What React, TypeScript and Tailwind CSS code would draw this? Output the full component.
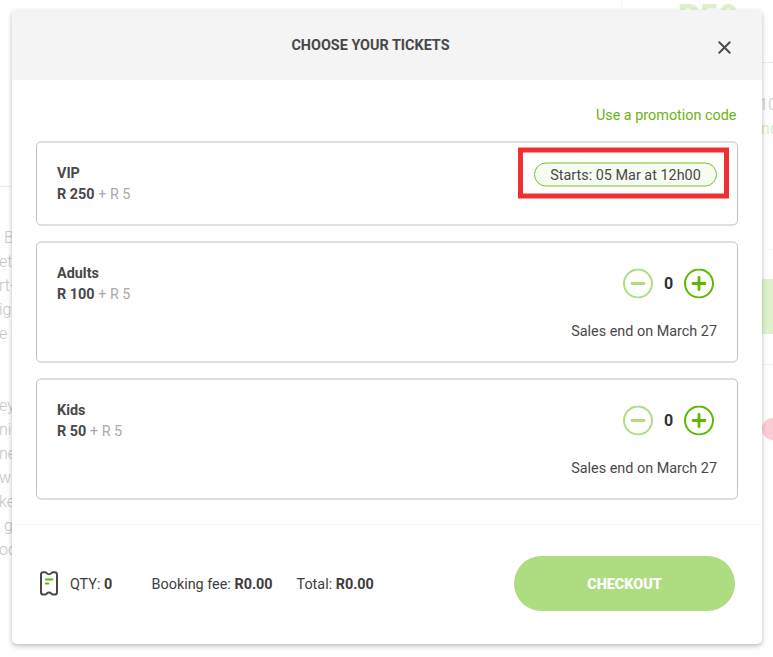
import { X } from "lucide-react";

const TICKETS = [
  { name: "VIP", price: "R 250", fee: "+ R 5", starts: "Starts: 05 Mar at 12h00" },
  { name: "Adults", price: "R 100", fee: "+ R 5", ends: "Sales end on March 27" },
  { name: "Kids", price: "R 50", fee: "+ R 5", ends: "Sales end on March 27" },
];

const INTRO = ["B", "et", "rt-", "ig", "e t"];
const DETAILS = ["ey", "ni", "ne", "w", "ke", "g", "oo"];

const TicketIcon = () => (
  <svg width="18" height="25" viewBox="0 0 18 25" fill="none" className="-mt-px shrink-0">
    <path
      d="M3.4 1.3H5.2C6.5 1.3 6.8 3.3 9 3.3S11.5 1.3 12.8 1.3H14.6C16.1 1.3 17 2.2 17 3.7V21.2C17 22.7 16.1 23.6 14.6 23.6H12.8C11.5 23.6 11.2 21.6 9 21.6S6.5 23.6 5.2 23.6H3.4C1.9 23.6 1 22.7 1 21.2V3.7C1 2.2 1.9 1.3 3.4 1.3Z"
      stroke="#484848"
      strokeWidth="2"
      strokeLinejoin="round"
    />
    <path d="M5.8 8.5H12.4M5.8 12.5H8.4" stroke="#5cb800" strokeWidth="1.8" strokeLinecap="round" />
  </svg>
);

const RoundButton = ({ plus = false }: { plus?: boolean }) => (
  <button aria-label={plus ? "Add" : "Remove"} className={plus ? "text-[#5cb800]" : "text-[#aedc80]"}>
    <svg width="30" height="30" viewBox="0 0 30 30" fill="none" stroke="currentColor" className="block">
      <circle cx="15" cy="15" r="14" strokeWidth="2" />
      <path d={plus ? "M9 15H21M15 9V21" : "M9 15H21"} strokeWidth="2.8" strokeLinecap="round" />
    </svg>
  </button>
);

const Backdrop = () => (
  <div className="flex h-full justify-between overflow-hidden text-base leading-6 font-light text-[#c4c4c4]">
    <div className="w-10 shrink-0 pt-[186px]">
      <div className="h-10 border-t border-[#ececec]" />
      <div className="-ml-px flex flex-col">
        {INTRO.map((line) => (
          <span key={line} className={line === "B" ? "pl-[5px] whitespace-nowrap" : "whitespace-nowrap"}>
            {line}
          </span>
        ))}
      </div>
      <div className="mt-12 -ml-px flex flex-col">
        {DETAILS.map((line) => (
          <span key={line} className={line === "g" ? "pl-[5px]" : ""}>
            {line}
          </span>
        ))}
      </div>
    </div>
    <div className="flex w-[152px] shrink-0 flex-col">
      <div className="h-[63px] shrink-0 border-b border-l border-b-[#ececec] border-l-[#f6f6f6] pl-14">
        <span className="block text-[33px] leading-[34px] font-black text-[#def1cc]">R50</span>
      </div>
      <div className="mt-[30px] pl-[138px] font-normal text-[#d6d6d6]">10</div>
      <div className="pl-[140px] font-normal whitespace-nowrap text-[#dcecc9]">nc</div>
      <div className="ml-[148px] h-[109px] shrink-0 border-b border-[#f3f3f3]" />
      <div className="mt-[29px] ml-[130px] h-[55px] shrink-0 bg-[#def1cc]" />
      <div className="mt-[30px] h-px shrink-0 bg-[#f3f3f3]" />
      <div className="mt-[53px] ml-[141px] size-[22px] shrink-0 rounded-full bg-[#fbccd4]" />
    </div>
  </div>
);

export default function App() {
  return (
    <div className="relative h-[657px] w-[773px] overflow-hidden bg-[#fefefe] font-['Roboto',sans-serif]">
      <Backdrop />

      <div className="absolute top-[10px] left-[12px] flex h-[633.5px] w-[750px] flex-col rounded-[5px] bg-white text-[14.4px] text-[#484848] shadow-[0_2px_5px_rgba(0,0,0,0.26)]">
        {/* Header */}
        <header className="flex h-[70px] shrink-0 items-center rounded-t-[5px] bg-[#f4f4f4]">
          <h1 className="flex-1 pt-px text-center font-bold">CHOOSE YOUR TICKETS</h1>
          <button aria-label="Close" className="mt-[5px] mr-[27px] ml-[-15px]">
            <X size={21} strokeWidth={2.2} />
          </button>
        </header>

        {/* Ticket list */}
        <section className="flex flex-col px-6 pt-[25px]">
          <a href="#" className="mr-[1.5px] self-end pt-px leading-5 text-[#66b512]">
            Use a promotion code
          </a>
          <div className="mt-[15px] flex flex-col gap-4">
            {TICKETS.map((ticket) => (
              <div
                key={ticket.name}
                className={`flex translate-y-[0.5px] justify-between rounded-[5px] border border-[#c0c0c0] px-5 pt-[19.5px] leading-[21px] ${ticket.starts ? "h-[84px]" : "h-[121px]"}`}
              >
                <div>
                  <p className="font-bold">{ticket.name}</p>
                  <p>
                    <b>{ticket.price}</b> <span className="text-[#aaa]">{ticket.fee}</span>
                  </p>
                </div>
                {ticket.starts ? (
                  <div className="-mt-[14.5px] -mr-[11.5px] flex h-[51px] w-[211px] justify-end border-[5px] border-[#f03030] pt-[10px] pr-[6.5px]">
                    <span className="flex h-6 w-[183px] items-center justify-center rounded-full border border-[#75c22b] bg-[#f6fcf1]">
                      {ticket.starts}
                    </span>
                  </div>
                ) : (
                  <div className="flex flex-col items-end pt-[6.5px]">
                    <div className="mr-[3px] flex items-center gap-[11px]">
                      <RoundButton />
                      <span className="w-[9px] text-center text-base font-bold text-[#2d3039]">0</span>
                      <RoundButton plus />
                    </div>
                    <p className="mt-[22px]">{ticket.ends}</p>
                  </div>
                )}
              </div>
            ))}
          </div>
        </section>

        {/* Summary */}
        <footer className="mt-[25px] flex h-[118px] items-center border-t border-[#f8f8f8] pr-[27px] pl-7 text-[#3d3d3d]">
          <TicketIcon />
          <span className="ml-3 w-[81.5px] pt-0.5">
            QTY: <b>0</b>
          </span>
          <span className="w-[145px] pt-0.5">
            Booking fee: <b>R0.00</b>
          </span>
          <span className="pt-0.5">
            Total: <b>R0.00</b>
          </span>
          <button className="ml-auto h-[55px] w-[221px] rounded-full bg-[#aedc80] pt-0.5 font-black text-white">
            CHECKOUT
          </button>
        </footer>
      </div>
    </div>
  );
}
